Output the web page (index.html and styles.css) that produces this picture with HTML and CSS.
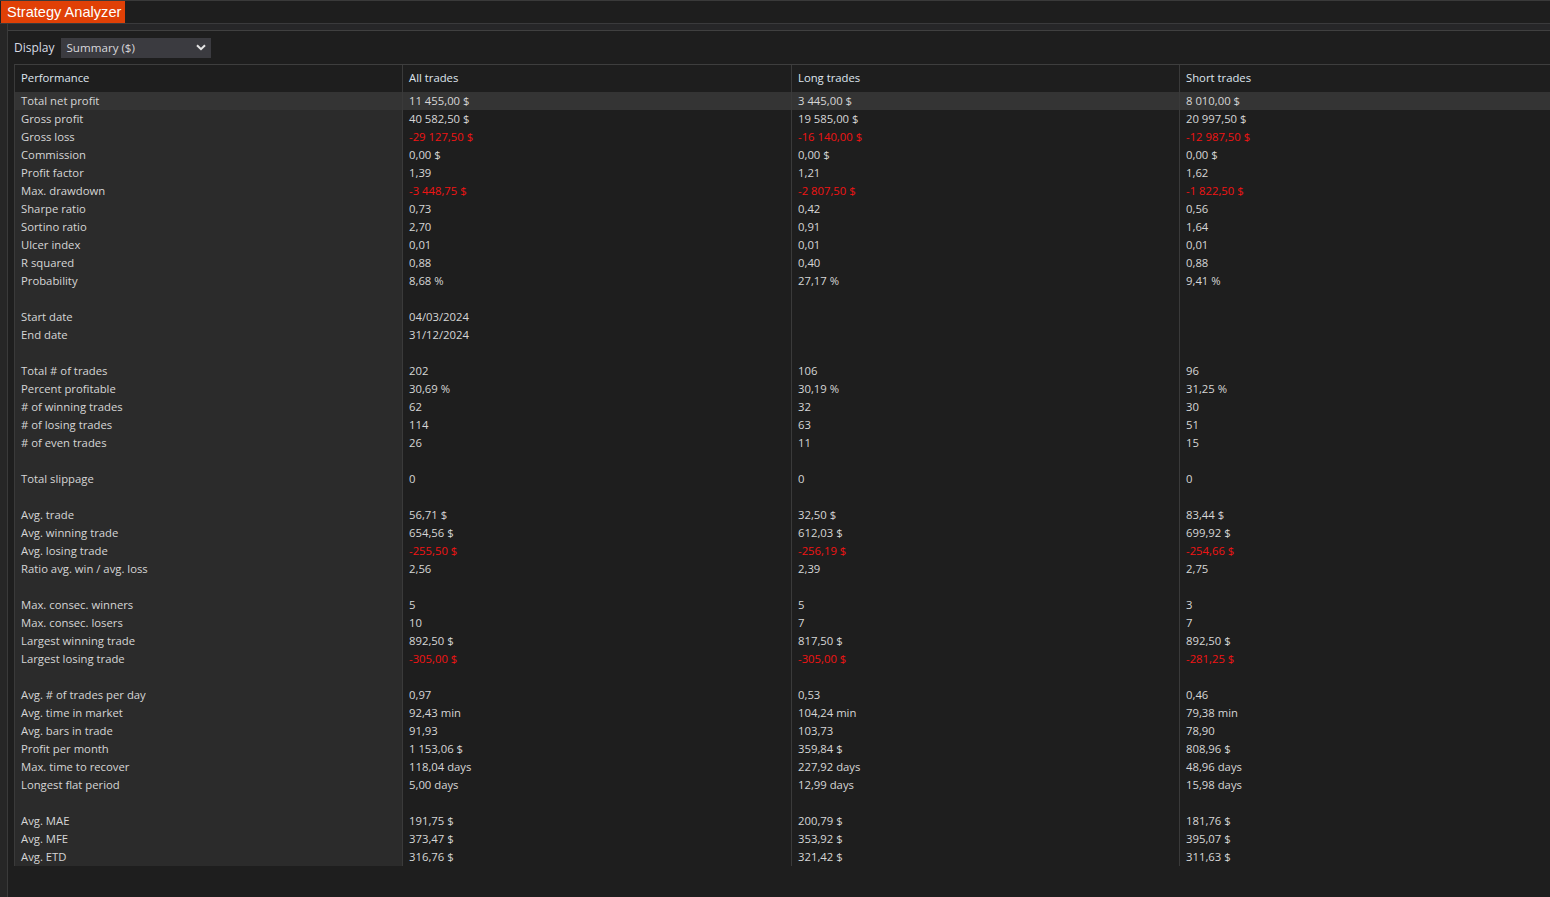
FILE: index.html
```html
<!DOCTYPE html>
<html>
<head>
<meta charset="utf-8">
<title>Strategy Analyzer</title>
<link rel="stylesheet" href="styles.css">
</head>
<body>
<div class="tabbar"><div class="tab">Strategy Analyzer</div></div>
<div class="main">
  <div class="side"></div>
  <div class="content">
    <div class="strip"></div>
    <div class="toolbar">
      <span class="lbl">Display</span>
      <div class="select"><span>Summary ($)</span>
        <svg class="chev" width="10" height="7" viewBox="0 0 10 7"><path d="M1 1.2 L5 5.2 L9 1.2" fill="none" stroke="#e6e6e6" stroke-width="2"/></svg>
      </div>
    </div>
    <div class="table">
      <div class="row head"><div>Performance</div><div>All trades</div><div>Long trades</div><div>Short trades</div></div>
      <div class="row sel"><div>Total net profit</div><div>11 455,00 $</div><div>3 445,00 $</div><div>8 010,00 $</div></div>
      <div class="row"><div>Gross profit</div><div>40 582,50 $</div><div>19 585,00 $</div><div>20 997,50 $</div></div>
      <div class="row neg"><div>Gross loss</div><div>-29 127,50 $</div><div>-16 140,00 $</div><div>-12 987,50 $</div></div>
      <div class="row"><div>Commission</div><div>0,00 $</div><div>0,00 $</div><div>0,00 $</div></div>
      <div class="row"><div>Profit factor</div><div>1,39</div><div>1,21</div><div>1,62</div></div>
      <div class="row neg"><div>Max. drawdown</div><div>-3 448,75 $</div><div>-2 807,50 $</div><div>-1 822,50 $</div></div>
      <div class="row"><div>Sharpe ratio</div><div>0,73</div><div>0,42</div><div>0,56</div></div>
      <div class="row"><div>Sortino ratio</div><div>2,70</div><div>0,91</div><div>1,64</div></div>
      <div class="row"><div>Ulcer index</div><div>0,01</div><div>0,01</div><div>0,01</div></div>
      <div class="row"><div>R squared</div><div>0,88</div><div>0,40</div><div>0,88</div></div>
      <div class="row"><div>Probability</div><div>8,68 %</div><div>27,17 %</div><div>9,41 %</div></div>
      <div class="row"><div></div><div></div><div></div><div></div></div>
      <div class="row"><div>Start date</div><div>04/03/2024</div><div></div><div></div></div>
      <div class="row"><div>End date</div><div>31/12/2024</div><div></div><div></div></div>
      <div class="row"><div></div><div></div><div></div><div></div></div>
      <div class="row"><div>Total # of trades</div><div>202</div><div>106</div><div>96</div></div>
      <div class="row"><div>Percent profitable</div><div>30,69 %</div><div>30,19 %</div><div>31,25 %</div></div>
      <div class="row"><div># of winning trades</div><div>62</div><div>32</div><div>30</div></div>
      <div class="row"><div># of losing trades</div><div>114</div><div>63</div><div>51</div></div>
      <div class="row"><div># of even trades</div><div>26</div><div>11</div><div>15</div></div>
      <div class="row"><div></div><div></div><div></div><div></div></div>
      <div class="row"><div>Total slippage</div><div>0</div><div>0</div><div>0</div></div>
      <div class="row"><div></div><div></div><div></div><div></div></div>
      <div class="row"><div>Avg. trade</div><div>56,71 $</div><div>32,50 $</div><div>83,44 $</div></div>
      <div class="row"><div>Avg. winning trade</div><div>654,56 $</div><div>612,03 $</div><div>699,92 $</div></div>
      <div class="row neg"><div>Avg. losing trade</div><div>-255,50 $</div><div>-256,19 $</div><div>-254,66 $</div></div>
      <div class="row"><div>Ratio avg. win / avg. loss</div><div>2,56</div><div>2,39</div><div>2,75</div></div>
      <div class="row"><div></div><div></div><div></div><div></div></div>
      <div class="row"><div>Max. consec. winners</div><div>5</div><div>5</div><div>3</div></div>
      <div class="row"><div>Max. consec. losers</div><div>10</div><div>7</div><div>7</div></div>
      <div class="row"><div>Largest winning trade</div><div>892,50 $</div><div>817,50 $</div><div>892,50 $</div></div>
      <div class="row neg"><div>Largest losing trade</div><div>-305,00 $</div><div>-305,00 $</div><div>-281,25 $</div></div>
      <div class="row"><div></div><div></div><div></div><div></div></div>
      <div class="row"><div>Avg. # of trades per day</div><div>0,97</div><div>0,53</div><div>0,46</div></div>
      <div class="row"><div>Avg. time in market</div><div>92,43 min</div><div>104,24 min</div><div>79,38 min</div></div>
      <div class="row"><div>Avg. bars in trade</div><div>91,93</div><div>103,73</div><div>78,90</div></div>
      <div class="row"><div>Profit per month</div><div>1 153,06 $</div><div>359,84 $</div><div>808,96 $</div></div>
      <div class="row"><div>Max. time to recover</div><div>118,04 days</div><div>227,92 days</div><div>48,96 days</div></div>
      <div class="row"><div>Longest flat period</div><div>5,00 days</div><div>12,99 days</div><div>15,98 days</div></div>
      <div class="row"><div></div><div></div><div></div><div></div></div>
      <div class="row"><div>Avg. MAE</div><div>191,75 $</div><div>200,79 $</div><div>181,76 $</div></div>
      <div class="row"><div>Avg. MFE</div><div>373,47 $</div><div>353,92 $</div><div>395,07 $</div></div>
      <div class="row"><div>Avg. ETD</div><div>316,76 $</div><div>321,42 $</div><div>311,63 $</div></div>
    </div>
  </div>
</div>
</body>
</html>
```
FILE: styles.css
```css
html, body {
  margin: 0;
  padding: 0;
  height: 100%;
  background: #1e1e1e;
  color: #d6d6d6;
  font-family: "Open Sans", "Noto Sans", sans-serif;
  font-size: 11.3px;
  overflow: hidden;
}
.tabbar {
  height: 22px;
  border-top: 1px solid #3a3a3a;
  border-bottom: 1px solid #3a3a3c;
  display: flex;
}
.tab {
  margin-left: 1px;
  width: 124px;
  height: 22px;
  background: #e04006;
  color: #ffffff;
  font-family: "Liberation Sans", Arial, sans-serif;
  font-size: 14.6px;
  line-height: 22px;
  padding-left: 6px;
  box-sizing: border-box;
  white-space: nowrap;
}
.main {
  display: flex;
  height: calc(100% - 24px);
}
.side {
  width: 7px;
  background: #262626;
  border-right: 1px solid #3a3a3a;
  flex: none;
}
.content {
  flex: 1;
  display: flex;
  flex-direction: column;
  min-width: 0;
}
.strip {
  height: 6px;
  background: #262628;
  border-bottom: 1px solid #404040;
}
.toolbar {
  display: flex;
  align-items: center;
  height: 33px;
  padding-left: 6px;
  box-sizing: border-box;
}
.lbl {
  color: #d8dce4;
  margin-right: 6px;
  font-size: 12px;
}
.select {
  width: 150px;
  height: 20px;
  background: #3b3b40;
  display: flex;
  align-items: center;
  justify-content: space-between;
  padding: 0 6px;
  box-sizing: border-box;
  color: #d8d8dc;
  font-size: 11.6px;
}
.chev { margin-right: -1px; }
.table {
  margin-left: 6px;
  border-top: 1px solid #3e3e3e;
  border-left: 1px solid #3a3a3a;
}
.row {
  display: grid;
  grid-template-columns: 388px 389px 388px 1fr;
  height: 18px;
  line-height: 18px;
}
.row > div {
  padding-left: 6px;
  white-space: nowrap;
  overflow: hidden;
  box-sizing: border-box;
}
.row > div:nth-child(-n+3) {
  border-right: 1px solid #3a3a3a;
}
.row > div:first-child {
  background: #2b2b2b;
}
.row.head {
  height: 27px;
  line-height: 26px;
  color: #dfe5ee;
}
.row.head > div:first-child { background: #1e1e1e; }
.row.sel > div, .row.sel > div:first-child {
  background: #343434;
}
.row.neg > div:not(:first-child) {
  color: #f01414;
}
```
